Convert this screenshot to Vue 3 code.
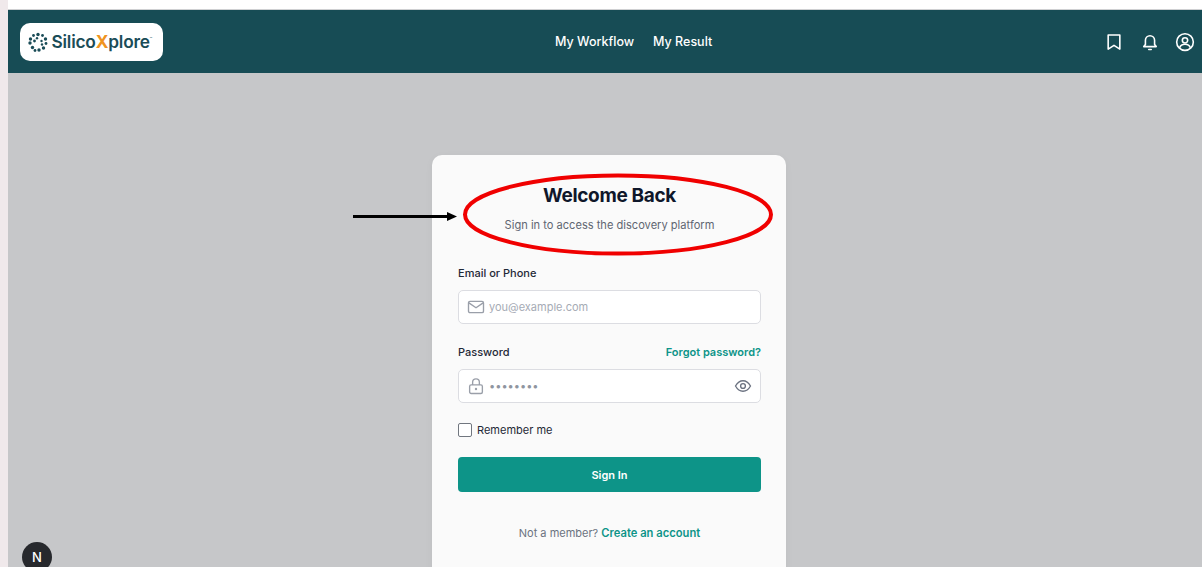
<template>
  <div class="screen">
    <div class="edge"></div>
    <div class="window">
      <div class="topstrip"></div>
      <header class="navbar">
        <div class="logo">
          <svg class="logo-mark" width="20" height="20" viewBox="0 0 20 20">
            <circle v-for="d in logoDots" :key="d.id" :cx="d.x" :cy="d.y" :r="d.r" fill="#1a4c57" />
          </svg>
          <span class="logo-text">Silico<span class="logo-x">X</span>plore</span>
          <span class="logo-tm">™</span>
        </div>
        <nav class="nav-links">
          <a>My Workflow</a>
          <a>My Result</a>
        </nav>
        <div class="nav-icons">
          <svg width="20" height="20" viewBox="0 0 24 24" fill="none" stroke="#fff" stroke-width="1.9" stroke-linejoin="round">
            <path d="M5 3.500h14v17l-7-4.500-7 4.500z" />
          </svg>
          <svg width="20" height="20" viewBox="0 0 24 24" fill="none" stroke="#fff" stroke-width="1.9" stroke-linecap="round" stroke-linejoin="round">
            <path d="M4.500 17.500h15l-2-2.600V10a5.500 5.500 0 0 0-11 0v4.900z" />
            <path d="M10.500 21h3" />
          </svg>
          <svg width="20" height="20" viewBox="0 0 24 24" fill="none" stroke="#fff" stroke-width="1.9">
            <circle cx="12" cy="12" r="10" />
            <circle cx="12" cy="10" r="3.200" />
            <path d="M5.500 19c1-3 3.500-4.200 6.500-4.200s5.500 1.200 6.500 4.200" />
          </svg>
        </div>
      </header>

      <main class="page">
        <section class="card">
          <h1>Welcome Back</h1>
          <p class="subtitle">Sign in to access the discovery platform</p>

          <form class="form" @submit.prevent>
            <label class="field-label" for="email">Email or Phone</label>
            <div class="input-box">
              <svg width="18" height="18" viewBox="0 0 24 24" fill="none" stroke="#9a9fa9" stroke-width="1.800" stroke-linejoin="round">
                <rect x="2" y="4.500" width="20" height="15" rx="2" />
                <path d="M2.500 6.500 12 13l9.500-6.500" />
              </svg>
              <input id="email" type="text" placeholder="you@example.com" />
            </div>

            <div class="label-row">
              <label class="field-label" for="password">Password</label>
              <a class="link">Forgot password?</a>
            </div>
            <div class="input-box">
              <svg width="18" height="18" viewBox="0 0 24 24" fill="none" stroke="#9a9fa9" stroke-width="1.800" stroke-linejoin="round">
                <rect x="3.500" y="10.500" width="17" height="11.500" rx="2" />
                <path d="M7.500 10.500V7a4.500 4.500 0 0 1 9 0v3.500" />
                <circle cx="12" cy="16" r="0.700" fill="#9a9fa9" />
              </svg>
              <input id="password" class="pw" type="text" placeholder="••••••••" />
              <svg width="18" height="18" viewBox="0 0 24 24" fill="none" stroke="#6b7280" stroke-width="1.800">
                <path d="M2 12c2.500-4.500 6-7 10-7s7.500 2.500 10 7c-2.500 4.500-6 7-10 7s-7.500-2.500-10-7z" />
                <circle cx="12" cy="12" r="3.200" />
              </svg>
            </div>

            <label class="remember">
              <span class="checkbox"></span>
              Remember me
            </label>

            <button class="submit" type="submit">Sign In</button>
          </form>

          <p class="signup">Not a member? <a class="link">Create an account</a></p>
        </section>

        <div class="dev-badge">N</div>
      </main>
    </div>

    <!-- markup drawn on top of the screenshot -->
    <svg class="annotation" width="1202" height="567" viewBox="0 0 1202 567" fill="none">
      <ellipse cx="618" cy="214.500" rx="153" ry="39" stroke="#f00000" stroke-width="4" />
      <path d="M353 216.500h96" stroke="#000" stroke-width="3" />
      <path d="M447 212l10 4.500-10 4.500z" fill="#000" />
    </svg>
  </div>
</template>

<script setup>
// ring of dots for the logo mark
const logoDots = [
  [10, 2.500, 1.700], [14.500, 3.500, 1.400], [5.500, 3.500, 1.400], [17.500, 7, 1.700], [2.500, 7, 1.700],
  [18, 11.500, 1.400], [2, 11, 1.700], [15.500, 16, 1.700], [4.500, 15.500, 1.700], [11, 18, 1.700],
  [7, 18.500, 1.400], [6.500, 9, 1.400], [13.500, 9, 1.200], [9, 6.300, 1.200], [14, 12.500, 1.200],
].map(([x, y, r], id) => ({ id, x, y, r }))
</script>

<style>
html, body {
  margin: 0;
  overflow: hidden;
}
</style>

<style scoped>
.screen {
  position: relative;
  display: flex;
  width: 1202px;
  height: 567px;
  overflow: hidden;
  font-family: Inter, "Liberation Sans", sans-serif;
  background: #c6c7c9;
}
.edge {
  width: 8px;
  flex-shrink: 0;
  background: #f0e9eb;
}
.window {
  flex: 1;
  display: flex;
  flex-direction: column;
  min-width: 0;
}
.topstrip {
  height: 9px;
  background: #fff;
  border-bottom: 1px solid #cfd0d2;
}
.navbar {
  height: 63px;
  background: #174c55;
  display: flex;
  align-items: center;
  justify-content: space-between;
  padding: 0 7px 0 12px;
  position: relative;
  box-sizing: border-box;
}
.logo {
  width: 143px;
  height: 38px;
  background: #fff;
  border-radius: 10px;
  display: flex;
  align-items: center;
  padding-left: 8px;
  box-sizing: border-box;
}
.logo-mark {
  flex-shrink: 0;
}
.logo-text {
  margin-left: 3.500px;
  font-size: 17.300px;
  font-weight: 600;
  color: #1a4c57;
  letter-spacing: -0.2px;
}
.logo-x {
  color: #ef9320;
  font-weight: 700;
}
.logo-tm {
  font-size: 4px;
  color: #1a4c57;
  margin-bottom: 6px;
}
.nav-links {
  position: absolute;
  left: 547px;
  top: 0;
  height: 100%;
  display: flex;
  align-items: center;
  gap: 19px;
  font-size: 12.500px;
  font-weight: 500;
  color: #fff;
}
.nav-icons {
  display: flex;
  align-items: center;
  gap: 15.500px;
}
.page {
  flex: 1;
  position: relative;
  display: flex;
  justify-content: center;
  padding-top: 82px;
  padding-left: 8px;
  box-sizing: border-box;
  min-height: 0;
}
.card {
  width: 354px;
  height: 430px;
  flex-shrink: 0;
  box-sizing: border-box;
  background: #fafafa;
  border-radius: 10px;
  padding: 30px 25px 0 26px;
  box-shadow: 0 2px 8px rgba(0, 0, 0, 0.04);
}
h1 {
  margin: 0;
  font-size: 19px;
  line-height: 22px;
  font-weight: 700;
  text-align: center;
  color: #0f172a;
  letter-spacing: -0.35px;
}
.subtitle {
  margin: 10px 0 0;
  font-size: 11.100px;
  line-height: 16px;
  text-align: center;
  color: #5f6672;
}
.form {
  margin-top: 32px;
  display: flex;
  flex-direction: column;
}
.field-label {
  font-size: 11px;
  line-height: 16px;
  font-weight: 500;
  color: #1f2937;
}
.input-box {
  margin-top: 9px;
  height: 34px;
  box-sizing: border-box;
  background: #fff;
  border: 1px solid #dcdde2;
  border-radius: 5px;
  display: flex;
  align-items: center;
  gap: 4px;
  padding: 0 8px;
}
input {
  flex: 1;
  min-width: 0;
  border: 0;
  outline: 0;
  padding: 0;
  background: transparent;
  font: inherit;
  font-size: 11px;
  color: #111827;
}
input::placeholder {
  color: #a6abb5;
  opacity: 1;
}
input.pw::placeholder {
  color: #8f95a0;
}
.label-row {
  margin-top: 20px;
  display: flex;
  justify-content: space-between;
  align-items: center;
}
.link {
  color: #0d9488;
  font-weight: 600;
  font-size: 11px;
}
.signup .link {
  font-size: 11.200px;
}
.remember {
  margin-top: 19px;
  display: flex;
  align-items: center;
  gap: 5px;
  font-size: 11px;
  line-height: 16px;
  color: #1f2937;
}
.checkbox {
  width: 12px;
  height: 12px;
  border: 1px solid #71767f;
  border-radius: 2px;
  background: #fff;
}
.submit {
  margin-top: 19px;
  height: 35px;
  border: 0;
  border-radius: 4px;
  background: #0d9488;
  color: #fff;
  font: inherit;
  font-size: 11px;
  font-weight: 600;
}
.signup {
  margin: 33px 0 0;
  font-size: 11px;
  line-height: 16px;
  text-align: center;
  color: #6b7280;
}
.dev-badge {
  position: absolute;
  left: 14px;
  bottom: -5px;
  width: 30px;
  height: 30px;
  border-radius: 50%;
  background: #27292d;
  color: #fff;
  font-size: 13px;
  font-weight: 500;
  display: flex;
  align-items: center;
  justify-content: center;
}
.annotation {
  position: absolute;
  left: 0;
  top: 0;
  pointer-events: none;
}
</style>
